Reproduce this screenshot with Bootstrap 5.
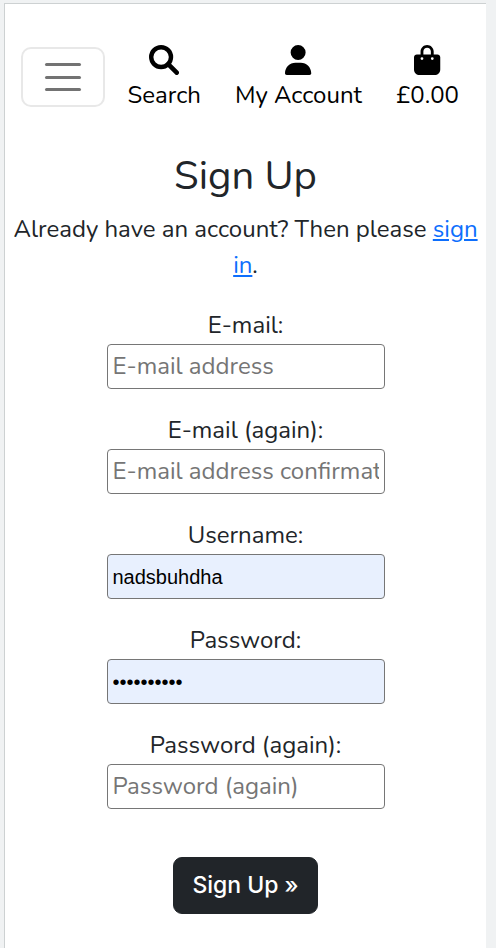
<!DOCTYPE html>
<html lang="en">
<head>
<meta charset="utf-8">
<meta name="viewport" content="width=device-width, initial-scale=1">
<title>Sign Up</title>
<link href="https://cdn.jsdelivr.net/npm/bootstrap@5.3.0/dist/css/bootstrap.min.css" rel="stylesheet">
<style>
  body { background: #f0f2f3; font-family: Nunito, Lato, sans-serif; font-size: 24px; line-height: 36px; padding: 3px 10px 0 4px; }
  .page { background: #fff; border: 1px solid #cdd1d2; border-width: 1px 0 0 1px; padding-bottom: 36px; }
  .site-header { padding: 41px 27px 0 16px; }
  .site-header .navbar-toggler { width: 84px; height: 60px; padding: 0; margin-top: 2px; border: 2px solid #e8e8e8; border-radius: 10px; }
  .bars { width: 36px; height: 28px; }
  .bars i { height: 3px; border-radius: 2px; background: #737373; }
  .nav-links { gap: 34px; }
  .nav-item-link { color: #000; text-decoration: none; white-space: nowrap; }
  .nav-item-link svg { height: 30px; margin-bottom: 2px; }
  .signup { padding: 39px 8px 0; }
  .signup h1 { font-size: 40px; line-height: 48px; font-weight: 400; margin-bottom: 11px; }
  .signup a { color: #0d6efd; }
  .intro { margin-bottom: 24px; }
  .field { gap: 1px; margin-bottom: 23px; }
  .field input { width: 278px; height: 45px; padding: 0 5px 2px; border: 1px solid #767676; border-radius: 4px; background: #fff; color: #000; font-size: 24px; }
  .field input::placeholder { color: #757575; opacity: 1; }
  .field input.filled { background: #e8f0fe; font-family: "Liberation Sans", Arial, sans-serif; font-size: 20px; padding: 2px 5px 0; }
  .btn-signup { margin-top: 25px; height: 57px; padding: 0 18px; border-radius: 9px; font-size: 23px; font-weight: 500; font-family: Inter, sans-serif; }
</style>
<script src="https://cdn.jsdelivr.net/npm/bootstrap@5.3.0/dist/js/bootstrap.bundle.min.js"></script>
</head>
<body>
<div class="page">
  <header class="site-header d-flex justify-content-between align-items-start">
    <button class="navbar-toggler d-flex align-items-center justify-content-center" type="button" aria-label="Toggle navigation">
      <span class="bars d-flex flex-column justify-content-between"><i></i><i></i><i></i></span>
    </button>
    <nav class="nav-links d-flex" aria-label="Shop">
    <a class="nav-item-link d-flex flex-column align-items-center" href="#">
      <svg viewBox="0 0 30 30" fill="none" stroke="currentColor" aria-hidden="true"><circle cx="12.100" cy="12.100" r="9.900" stroke-width="4.400"/><path d="M19.200 19.200L27.700 27.700" stroke-width="4.600" stroke-linecap="round"/></svg>
      Search
    </a>
    <a class="nav-item-link d-flex flex-column align-items-center" href="#">
      <svg viewBox="0 0 448 512" fill="currentColor" aria-hidden="true"><path d="M224 256A128 128 0 1 0 224 0a128 128 0 1 0 0 256zm-45.700 48C79.800 304 0 383.800 0 482.300C0 498.700 13.300 512 29.700 512H418.300c16.400 0 29.700-13.300 29.700-29.700C448 383.800 368.200 304 269.700 304H178.300z"/></svg>
      My Account
    </a>
    <a class="nav-item-link d-flex flex-column align-items-center" href="#">
      <svg viewBox="0 0 448 512" fill="currentColor" aria-hidden="true"><path d="M160 112c0-35.300 28.700-64 64-64s64 28.700 64 64v48H160V112zm-48 48H48c-26.500 0-48 21.500-48 48V416c0 53 43 96 96 96H352c53 0 96-43 96-96V208c0-26.500-21.500-48-48-48H336V112C336 50.100 285.900 0 224 0S112 50.100 112 112v48zm24 48a24 24 0 1 1 0 48 24 24 0 1 1 0-48zm152 24a24 24 0 1 1 48 0 24 24 0 1 1 -48 0z"/></svg>
      £0.00
    </a>
    </nav>
  </header>
  <main class="signup text-center">
    <h1>Sign Up</h1>
    <p class="intro">Already have an account? Then please <a href="#">sign in</a>.</p>
    <form>
      <div class="field d-flex flex-column align-items-center">
        <label for="email">E-mail:</label>
        <input id="email" type="email" placeholder="E-mail address">
      </div>
      <div class="field d-flex flex-column align-items-center">
        <label for="email2">E-mail (again):</label>
        <input id="email2" type="email" placeholder="E-mail address confirmation">
      </div>
      <div class="field d-flex flex-column align-items-center">
        <label for="username">Username:</label>
        <input id="username" class="filled" type="text" value="nadsbuhdha">
      </div>
      <div class="field d-flex flex-column align-items-center">
        <label for="password1">Password:</label>
        <input id="password1" class="filled" type="password" value="aaaaaaaaaa">
      </div>
      <div class="field d-flex flex-column align-items-center">
        <label for="password2">Password (again):</label>
        <input id="password2" type="password" placeholder="Password (again)">
      </div>
      <button class="btn btn-dark btn-signup" type="submit">Sign Up »</button>
    </form>
  </main>
</div>
</body>
</html>
